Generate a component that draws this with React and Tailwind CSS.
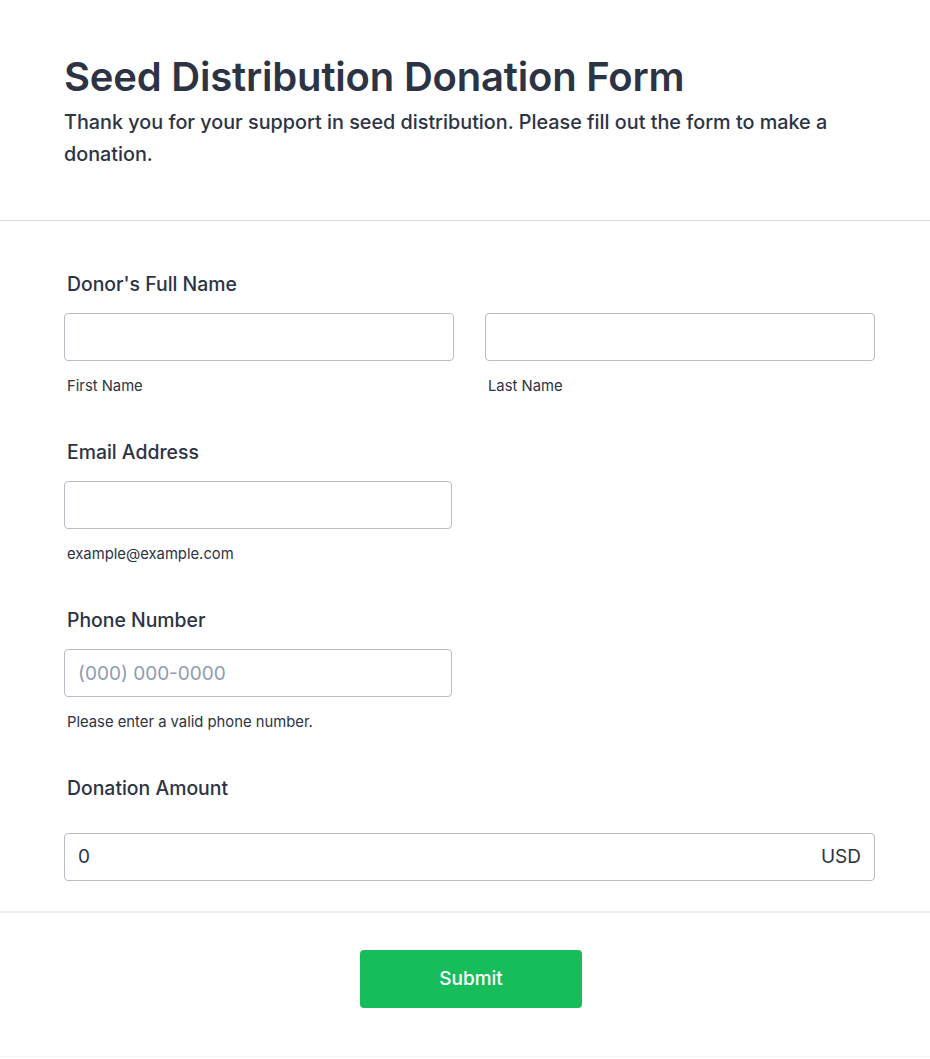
import React from 'react';

const font = { fontFamily: 'Inter, "Noto Sans", sans-serif' };

function Label({ children }) {
  return <div className="pl-[3px] text-[19.4px] leading-[28px] font-medium text-[#2c3345]">{children}</div>;
}

function Sub({ children }) {
  return <div className="mt-[15px] pl-[3px] text-[14.8px] leading-[20px] text-[#2c3345]">{children}</div>;
}

function Input({ className = '', placeholder }) {
  return (
    <input
      placeholder={placeholder}
      className={`mt-[15px] h-[48px] rounded-[4px] border border-[#b8bdc9] bg-white px-[13px] text-[19px] text-[#2c3345] placeholder-[#8d9cb1] outline-none ${className}`}
    />
  );
}

export default function App() {
  return (
    <div className="min-h-screen w-[930px] bg-white" style={font}>
      {/* Header */}
      <div className="pl-[64px] pr-[60px] pt-[54px] pb-[50px] border-b border-[#d8dae9]">
        <h1 className="text-[40px] leading-[46px] font-semibold text-[#2c3345] tracking-[-0.2px]">
          Seed Distribution Donation Form
        </h1>
        <p className="mt-[6px] text-[19.8px] leading-[32px] font-medium text-[#2c3345]">
          Thank you for your support in seed distribution. Please fill out the form to make a donation.
        </p>
      </div>

      {/* Fields */}
      <div className="pl-[64px] pr-[55px] pt-[49px] pb-[30px] border-b-2 border-[#ededf3]">
        <div>
          <Label>Donor's Full Name</Label>
          <div className="grid grid-cols-2 gap-x-[31px]">
            <div className="flex flex-col">
              <Input className="w-full" />
              <Sub>First Name</Sub>
            </div>
            <div className="flex flex-col">
              <Input className="w-full" />
              <Sub>Last Name</Sub>
            </div>
          </div>
        </div>

        <div className="mt-[42px] flex flex-col">
          <Label>Email Address</Label>
          <Input className="w-[388px]" />
          <Sub>example@example.com</Sub>
        </div>

        <div className="mt-[42px] flex flex-col">
          <Label>Phone Number</Label>
          <Input className="w-[388px]" placeholder="(000) 000-0000" />
          <Sub>Please enter a valid phone number.</Sub>
        </div>

        <div className="mt-[42px] flex flex-col">
          <Label>Donation Amount</Label>
          <div className="mt-[31px] flex h-[48px] items-center justify-between rounded-[4px] border border-[#b8bdc9] bg-white px-[13px] text-[19px] text-[#2c3345]">
            <span>0</span>
            <span>USD</span>
          </div>
        </div>
      </div>

      {/* Submit */}
      <div className="flex justify-center pl-[64px] pr-[52px] pt-[37px] pb-[48px] border-b border-[#f5f5f8]">
        <button className="h-[58px] w-[222px] rounded-[4px] bg-[#18bd5b] text-[19px] font-medium text-white">
          Submit
        </button>
      </div>
    </div>
  );
}
